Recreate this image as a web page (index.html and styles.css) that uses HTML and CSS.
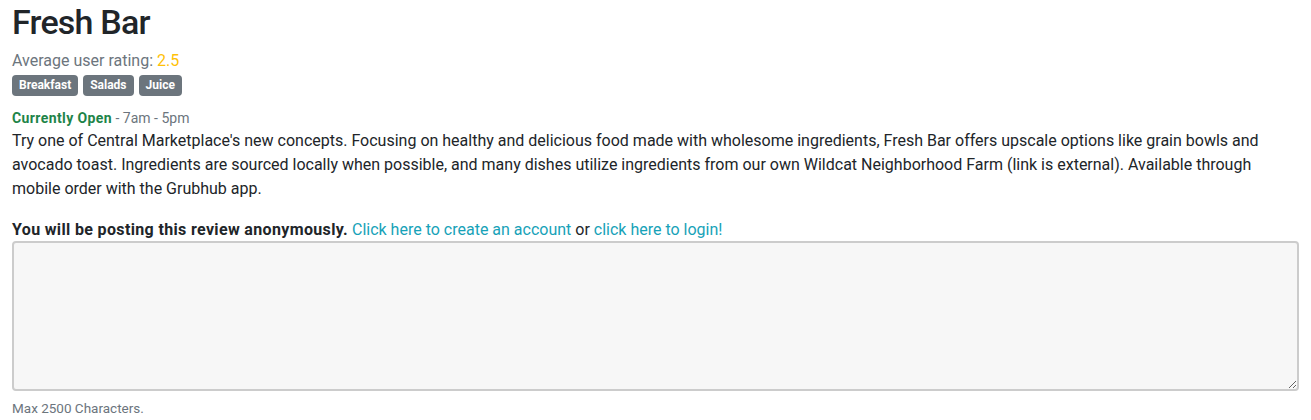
FILE: index.html
```html
<!DOCTYPE html>
<html lang="en">
<head>
<meta charset="utf-8">
<title>Fresh Bar</title>
<link rel="stylesheet" href="styles.css">
</head>
<body>
<main class="page">
  <h1 class="title">Fresh Bar</h1>
  <div class="rating">Average user rating: <span class="rating-value">2.5</span></div>
  <div class="tags">
    <span class="badge">Breakfast</span>
    <span class="badge">Salads</span>
    <span class="badge">Juice</span>
  </div>
  <div class="hours"><span class="open">Currently Open</span> - 7am - 5pm</div>
  <p class="desc">Try one of Central Marketplace's new concepts. Focusing on healthy and delicious food made with wholesome ingredients, Fresh Bar offers upscale options like grain bowls and avocado toast. Ingredients are sourced locally when possible, and many dishes utilize ingredients from our own Wildcat Neighborhood Farm (link is external). Available through mobile order with the Grubhub app.</p>
  <div class="anon"><strong class="anon-note">You will be posting this review anonymously.</strong> <a href="#">Click here to create an account</a> or <a href="#">click here to login!</a></div>
  <textarea class="review"></textarea>
  <small class="hint">Max 2500 Characters.</small>
</main>
</body>
</html>
```
FILE: styles.css
```css
html, body {
  margin: 0;
  padding: 0;
  background: #fff;
}
body {
  font-family: Roboto, "Noto Sans", sans-serif;
  font-size: 16px;
  line-height: 24px;
  color: #212529;
}
.page {
  padding: 0 12px;
  display: flex;
  flex-direction: column;
}
.title {
  margin: 0;
  font-size: 34px;
  line-height: 45px;
  letter-spacing: -0.8px;
  font-weight: 500;
}
.rating {
  margin-top: 4px;
  color: #6c757d;
}
.rating-value {
  color: #ffc107;
}
.tags {
  display: flex;
  gap: 5px;
  margin-top: 2px;
}
.badge {
  background: #6c757d;
  color: #fff;
  font-size: 12px;
  font-weight: 700;
  line-height: 13px;
  padding: 4px 7px;
  border-radius: 4px;
}
.hours {
  margin-top: 12px;
  font-size: 14px;
  line-height: 21px;
  color: #6c757d;
}
.open {
  color: #1e8449;
  font-weight: 700;
  letter-spacing: 0.4px;
}
.desc {
  margin: 0;
}
.anon {
  margin-top: 17px;
}
.anon-note {
  letter-spacing: 0.35px;
}
.anon a {
  color: #17a2b8;
  text-decoration: none;
}
.review {
  display: block;
  box-sizing: border-box;
  width: 100%;
  height: 150px;
  margin: -1px 0 0;
  background: #f7f7f7;
  border: 2px solid #cccccc;
  border-radius: 4px;
  resize: vertical;
}
.hint {
  margin-top: 8px;
  font-size: 13.5px;
  line-height: 19px;
  color: #6c757d;
}
```
